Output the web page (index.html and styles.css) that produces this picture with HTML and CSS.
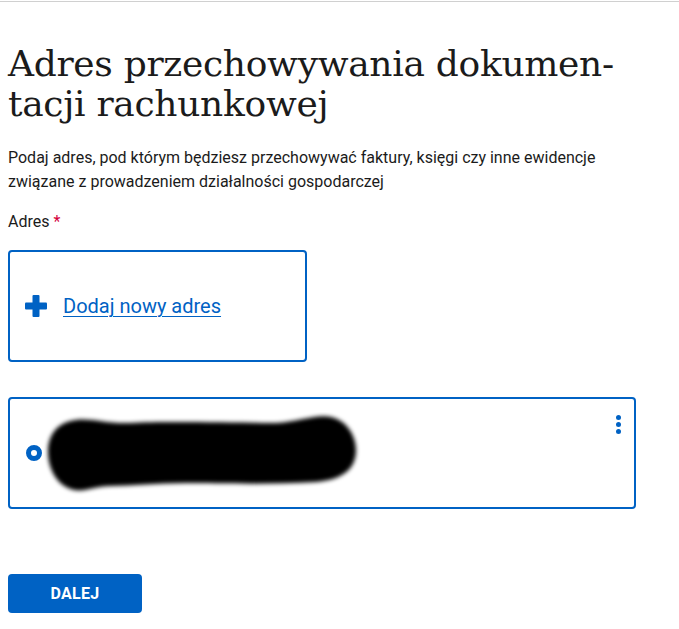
FILE: index.html
```html
<!DOCTYPE html>
<html lang="pl">
<head>
<meta charset="utf-8">
<title>Adres przechowywania dokumentacji rachunkowej</title>
<link rel="stylesheet" href="styles.css">
</head>
<body>
<div class="topline"></div>
<main class="page">
  <h1 class="title">Adres przechowywania dokumen-<br>tacji rachunkowej</h1>
  <p class="lead">Podaj adres, pod którym będziesz przechowywać faktury, księgi czy inne ewidencje związane z prowadzeniem działalności gospodarczej</p>
  <div class="label">Adres <span class="req">*</span></div>
  <div class="add-card">
    <svg class="plus" width="22" height="22" viewBox="0 0 22 22" aria-hidden="true">
      <rect x="7.5" y="0" width="7" height="22" rx="1" fill="#0062c4"/>
      <rect x="0" y="7.5" width="22" height="7" rx="1" fill="#0062c4"/>
    </svg>
    <a class="add-link" href="#">Dodaj nowy adres</a>
  </div>
  <div class="addr-card">
    <span class="radio"></span>
    <svg class="blob" width="330" height="84" viewBox="0 0 330 84" aria-hidden="true">
      <defs><filter id="bl" x="-10%" y="-20%" width="120%" height="140%"><feGaussianBlur stdDeviation="2.2"/></filter></defs>
      <path filter="url(#bl)" fill="#000" d="M40 8 C55 6 70 12 95 11 C130 9 200 11 240 11 C262 10 280 2 295 5 C312 9 320 25 320 38 C320 58 305 68 280 70 C230 73 180 71 150 71 C120 71 95 74 75 74 C58 74 50 80 38 78 C20 74 12 55 12 40 C12 22 22 10 40 8 Z"/>
    </svg>
    <span class="kebab"><i></i><i></i><i></i></span>
  </div>
  <button class="next" type="button">DALEJ</button>
</main>
</body>
</html>
```
FILE: styles.css
```css
html, body {
  margin: 0;
  padding: 0;
  background: #fff;
}
body {
  font-family: Roboto, "Liberation Sans", sans-serif;
  color: #1b1b1b;
}
.topline {
  margin-top: 1px;
  height: 1px;
  background: #d0d0d0;
}
.page {
  padding: 0 8px;
  display: flex;
  flex-direction: column;
  align-items: flex-start;
}
.title {
  margin: 42px 0 0;
  font-family: "DejaVu Serif", "Liberation Serif", serif;
  font-weight: 400;
  font-size: 36px;
  line-height: 40px;
  color: #1b1b1b;
  letter-spacing: -0.3px;
}
.lead {
  margin: 22px 0 0;
  font-size: 16px;
  line-height: 24px;
  max-width: 620px;
}
.label {
  margin-top: 16px;
  font-size: 16px;
  line-height: 24px;
}
.req {
  color: #d4003c;
}
.add-card {
  margin-top: 16px;
  box-sizing: border-box;
  width: 299px;
  height: 112px;
  border: 2px solid #0062c4;
  border-radius: 4px;
  padding-left: 15px;
  display: flex;
  align-items: center;
  gap: 16px;
}
.plus {
  display: block;
  flex: none;
}
.add-link {
  font-size: 20px;
  line-height: 24px;
  color: #0062c4;
  text-decoration: underline;
  text-underline-offset: 3px;
  text-decoration-thickness: 1px;
}
.addr-card {
  position: relative;
  margin-top: 35px;
  box-sizing: border-box;
  width: 628px;
  height: 112px;
  border: 2px solid #0062c4;
  border-radius: 4px;
  padding-left: 16px;
  display: flex;
  align-items: center;
}
.radio {
  flex: none;
  box-sizing: border-box;
  width: 16px;
  height: 16px;
  border: 5px solid #0062c4;
  border-radius: 50%;
  background: #fff;
}
.blob {
  display: block;
  flex: none;
  margin-left: -6px;
  margin-top: 2px;
}
.kebab {
  position: absolute;
  top: 16px;
  right: 13px;
  display: flex;
  flex-direction: column;
  gap: 2px;
}
.kebab i {
  display: block;
  width: 5px;
  height: 5px;
  border-radius: 50%;
  background: #0062c4;
}
.next {
  margin-top: 65px;
  width: 134px;
  height: 39px;
  border: 0;
  border-radius: 4px;
  background: #0062c4;
  color: #fff;
  font-family: Roboto, "Liberation Sans", sans-serif;
  font-weight: 700;
  font-size: 16px;
  letter-spacing: 0.3px;
  padding: 0;
}
```
